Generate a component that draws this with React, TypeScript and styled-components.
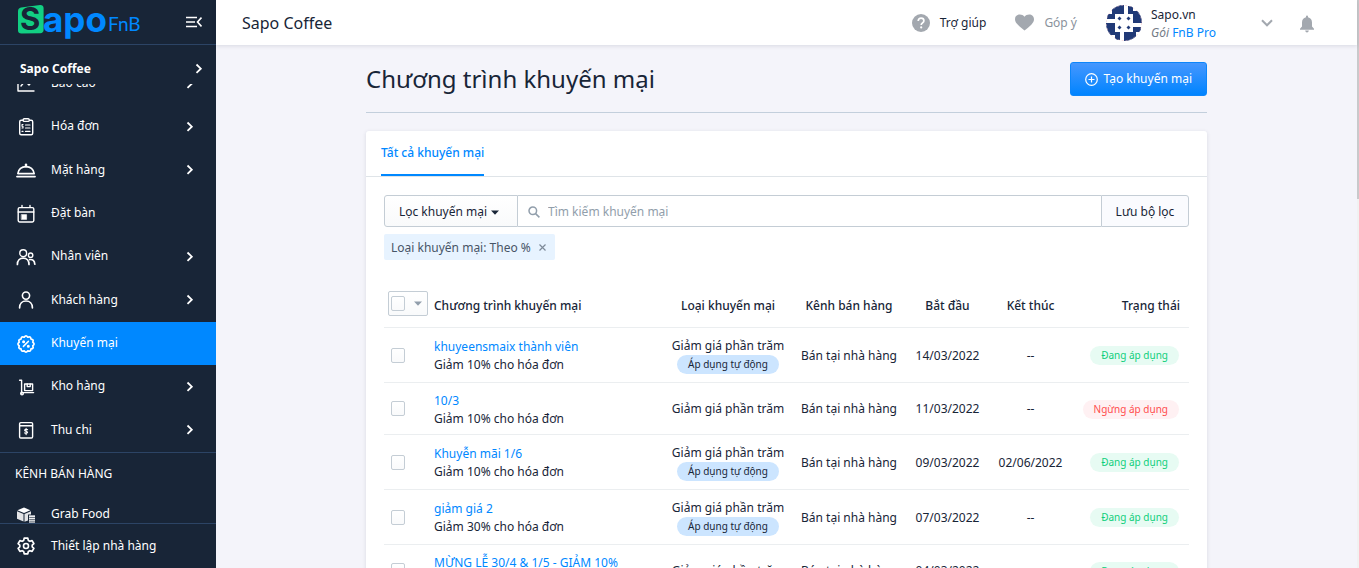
import React, { useLayoutEffect, useRef } from 'react';
import styled, { createGlobalStyle, css } from 'styled-components';

const GlobalStyle = createGlobalStyle`
  *, *::before, *::after { box-sizing: border-box; }
  body {
    margin: 0;
    background: #f4f4fa;
    color: #182537;
    font-family: "Noto Sans", "Open Sans", sans-serif;
    font-size: 12px;
    line-height: 18px;
  }
  button, input { font: inherit; color: inherit; }
  button { cursor: pointer; }
  a { text-decoration: none; color: inherit; }
`;

/* ---------- shell ---------- */

const Shell = styled.div`
  display: grid;
  grid-template-columns: 216px minmax(0, 1fr) 2px;
  height: 100vh;
  overflow: hidden;
`;

const ScrollRail = styled.div`
  background: #f1f1f1;
`;

const ScrollThumb = styled.div`
  height: 35%;
  background: #c9c9cb;
`;

/* ---------- sidebar ---------- */

const Sidebar = styled.aside`
  display: flex;
  flex-direction: column;
  min-height: 0;
  background: #182537;
  color: #fff;
`;

const LogoBar = styled.div`
  display: flex;
  flex: none;
  align-items: center;
  justify-content: space-between;
  height: 45px;
  padding: 0 14px 0 17px;
  border-bottom: 1px solid #2c4465;
`;

const IconButton = styled.button`
  display: flex;
  padding: 0;
  border: 0;
  background: none;
`;

const StoreLink = styled.a`
  display: flex;
  flex: none;
  align-items: center;
  justify-content: space-between;
  height: 39px;
  padding: 8px 13px 0 20px;
  font-weight: 700;
`;

const NavScroll = styled.nav`
  flex: 1;
  min-height: 0;
  overflow-y: auto;
  scrollbar-width: none;
`;

const NavList = styled.ul`
  display: grid;
  grid-auto-rows: 1fr;
  min-height: 390px;
  margin: 0;
  padding: 0;
  list-style: none;
`;

const ChannelSection = styled.section`
  border-top: 1px solid #2c4465;
`;

const ChannelHeading = styled.h2`
  margin: 0;
  padding: 12px 15px 10px;
  font-size: 12px;
  font-weight: 400;
  line-height: 18px;
`;

const NavLink = styled.a<{ $active?: boolean }>`
  display: grid;
  grid-template-columns: 20px 1fr auto;
  column-gap: 15px;
  align-items: center;
  height: 100%;
  min-height: 43px;
  padding: 0 22px 0 16px;
  background: ${(p) => (p.$active ? '#0088ff' : 'transparent')};
`;

const NavLabel = styled.span`
  padding-bottom: 1px;
`;

const SidebarFooter = styled.div`
  flex: none;
  height: 45px;
  border-top: 1px solid #2c4465;
`;

/* ---------- top bar ---------- */

const Main = styled.div`
  display: flex;
  flex-direction: column;
  min-width: 0;
  min-height: 0;
`;

const TopBar = styled.header`
  position: relative;
  display: flex;
  flex: none;
  align-items: center;
  justify-content: space-between;
  height: 45px;
  padding: 0 42px 0 26px;
  background: #fff;
  box-shadow: 0 1px 4px rgba(24, 37, 55, 0.12);
`;

const ShopName = styled.span`
  font-size: 16px;
  line-height: 20px;
`;

const TopActions = styled.div`
  display: flex;
  align-items: center;
`;

const TopLink = styled.a<{ $muted?: boolean }>`
  display: flex;
  align-items: center;
  gap: 10px;
  margin-right: 29px;
  color: ${(p) => (p.$muted ? '#8a929c' : '#182537')};
`;

const Account = styled.button`
  display: flex;
  align-items: center;
  width: 167px;
  margin-right: 26px;
  padding: 0;
  border: 0;
  background: none;
  text-align: left;
  svg:last-child { margin-left: auto; }
`;

const AccountText = styled.span`
  display: grid;
  margin-left: 9px;
  padding-top: 2px;
`;

const Plan = styled.span`
  color: #747c87;
  em { font-style: italic; }
  b { color: #0088ff; font-weight: 400; }
`;

/* ---------- page ---------- */

const Page = styled.main`
  flex: 1;
  min-height: 0;
  padding: 17px 20px 0;
  overflow: hidden;
`;

const Content = styled.div`
  max-width: 841px;
  margin: 0 auto;
`;

const TitleRow = styled.div`
  display: flex;
  align-items: center;
  justify-content: space-between;
  padding-bottom: 16px;
  border-bottom: 1px solid #c3cfdc;
`;

const Title = styled.h1`
  margin: 0;
  font-size: 24px;
  font-weight: 400;
  line-height: 34px;
`;

const PrimaryButton = styled.button`
  display: flex;
  align-items: center;
  gap: 5px;
  height: 34px;
  padding: 0 14px;
  border: 1px solid #0d86fa;
  border-radius: 3px;
  background: linear-gradient(#4697fe, #0084ff);
  color: #fff;
`;

const Card = styled.section`
  margin-top: 18px;
  border-radius: 3px;
  background: #fff;
  box-shadow: 0 1px 4px rgba(24, 37, 55, 0.12);
`;

const Tabs = styled.div`
  display: flex;
  padding: 0 15px;
  border-bottom: 1px solid #dfe4e8;
`;

const Tab = styled.button`
  height: 45px;
  padding: 0;
  border: 0;
  border-bottom: 2px solid #0088ff;
  background: none;
  color: #0088ff;
  font-weight: 500;
`;

const CardBody = styled.div`
  padding: 18px;
`;

const FilterBar = styled.form`
  display: flex;
  height: 32px;
`;

const filterButton = css`
  flex: none;
  border: 1px solid #c4cdd5;
  white-space: nowrap;
`;

const FilterButton = styled.button`
  ${filterButton}
  display: flex;
  align-items: center;
  justify-content: center;
  gap: 4px;
  width: 134px;
  padding: 2px 4px 0 0;
  border-radius: 3px 0 0 3px;
  background: linear-gradient(#fff, #f9fafb);
`;

const SaveButton = styled.button`
  ${filterButton}
  width: 88px;
  padding: 2px 0 0;
  border-radius: 0 3px 3px 0;
  background: #fafbfe;
`;

const SearchField = styled.label`
  display: flex;
  flex: 1;
  align-items: center;
  gap: 8px;
  min-width: 0;
  padding: 2px 0 0 10px;
  border: solid #c4cdd5;
  border-width: 1px 0;
`;

const SearchInput = styled.input`
  flex: 1;
  min-width: 0;
  padding: 0;
  border: 0;
  outline: 0;
  background: none;
  &::placeholder { color: #919eab; opacity: 1; }
`;

const Chip = styled.span`
  display: inline-flex;
  align-items: center;
  gap: 8px;
  height: 26px;
  margin-top: 7px;
  padding: 1px 9px 0 7px;
  border-radius: 2px;
  background: #e7f3ff;
  color: #475567;
`;

/* ---------- table ---------- */

const Table = styled.table`
  width: 100%;
  margin-top: 22px;
  border-collapse: collapse;
  table-layout: fixed;
`;

const HeadCell = styled.th<{ $align?: string }>`
  height: 45px;
  padding: 3px 0 0;
  border-bottom: 1px solid #ebeef0;
  font-weight: 500;
  text-align: ${(p) => p.$align ?? 'center'};
`;

const Cell = styled.td<{ $align?: string }>`
  padding: 2px 0 0;
  border-bottom: 1px solid #ebeef0;
  text-align: ${(p) => p.$align ?? 'center'};
`;

const NameHead = styled(HeadCell)`
  padding-left: 6px;
`;

const NameCell = styled(Cell)`
  padding: 9px 0 6px 6px;
`;

const TypeCell = styled(Cell)`
  padding: 9px 0 8px;
`;

const StatusHead = styled(HeadCell)`
  padding-right: 9px;
`;

const StatusCell = styled(Cell)`
  padding: 2px 10px 0 0;
`;

const CheckCell = styled(Cell)`
  padding: 1px 0 0 7px;
`;

const CheckHead = styled(HeadCell)`
  padding-left: 4px;
`;

const Checkbox = styled.input`
  appearance: none;
  display: block;
  width: 14px;
  height: 15px;
  margin: 0;
  border: 1px solid #c4cdd5;
  border-radius: 2px;
  background: linear-gradient(#fff, #f9fafb);
`;

const BulkBox = styled.span`
  display: flex;
  align-items: center;
  justify-content: space-between;
  width: 40px;
  height: 25px;
  margin-bottom: 4px;
  padding: 0 5px 0 2px;
  border: 1px solid #c4cdd5;
  border-radius: 2px;
  background: linear-gradient(#fff, #f9fafb);
`;

const PromoLink = styled.a`
  display: block;
  color: #0088ff;
  white-space: nowrap;
`;

const tones = {
  info: { bg: '#cce5ff', fg: '#182537' },
  success: { bg: '#e7fbf3', fg: '#0fcf7c' },
  danger: { bg: '#fff1f3', fg: '#ff4d4d' },
};

const Pill = styled.span<{ $tone: keyof typeof tones }>`
  display: inline-block;
  padding: 0 11px;
  border-radius: 10px;
  background: ${(p) => tones[p.$tone].bg};
  color: ${(p) => tones[p.$tone].fg};
  font-size: 10px;
  line-height: 19px;
  white-space: nowrap;
  vertical-align: top;
`;

/* ---------- icons ---------- */

const Chevron = () => (
  <svg width="8" height="12" viewBox="0 0 8 12" fill="none" stroke="#fff" strokeWidth="1.8">
    <path d="M1.5 1.5 5.8 5.7 1.5 9.9" />
  </svg>
);

const Caret = ({ color }: { color: string }) => (
  <svg width="8" height="5" viewBox="0 0 8 5" fill={color}>
    <path d="M0 0.5h8L4 4.8z" />
  </svg>
);

const NavIcon = ({ children }: { children: React.ReactNode }) => (
  <svg width="20" height="20" viewBox="0 0 20 20" fill="none" stroke="#fff" strokeWidth="1.4" strokeLinecap="round" strokeLinejoin="round">
    {children}
  </svg>
);

/* Scalloped badge outline: twelve bumps around the centre. */
const scallops = Array.from({ length: 12 }, (_, i) => {
  const at = (k: number, r: number) => {
    const a = (k * Math.PI) / 12;
    return `${(10 + r * Math.cos(a)).toFixed(2)} ${(10 + r * Math.sin(a)).toFixed(2)}`;
  };
  return `${i === 0 ? `M${at(-1, 7)}` : ''}Q${at(2 * i, 9.4)} ${at(2 * i + 1, 7)}`;
}).join('') + 'z';

const icons = {
  report: <path d="M2 3v14h16M5 12l4-5 4 4 5-6" />,
  invoice: (
    <>
      <rect x="3.7" y="3.2" width="13" height="14.6" rx="1.5" />
      <rect x="7.2" y="1.8" width="6" height="2.6" rx="1" fill="#182537" />
      <path d="M9.5 8h4.5M9.5 11h4.5M6 14.4h1M9.5 14.4h4.5M7 7.5H6v1.7h1v1.8H6" strokeWidth="1.1" />
    </>
  ),
  dish: (
    <>
      <path d="M1.8 13.6C2.6 9.4 5.8 6.6 10 6.6s7.4 2.8 8.2 7z" strokeWidth="1.6" />
      <path d="M10 4.6v1.6" strokeWidth="2.4" />
      <path d="M1 16.6h18" strokeWidth="1.8" />
    </>
  ),
  booking: (
    <>
      <rect x="2.2" y="3.6" width="15.6" height="14.4" rx="1.4" />
      <path d="M2.2 8h15.6M6 1.4v2M14 1.4v2" />
      <path d="M5.6 10.6h5v4.8h-5z" fill="#fff" strokeWidth="0.6" />
    </>
  ),
  staff: (
    <>
      <circle cx="7.2" cy="6.2" r="3.4" />
      <path d="M1.4 17.4c0-3.8 2.4-6.2 5.8-6.2s5.8 2.4 5.8 6.2" strokeWidth="1.7" />
      <circle cx="14.6" cy="8.2" r="2.2" />
      <path d="M13.6 12.6c3-.6 5 1.4 5.2 4.6" strokeWidth="1.7" />
    </>
  ),
  customer: (
    <>
      <circle cx="10" cy="5.6" r="3.6" strokeWidth="1.6" />
      <path d="M3.6 17.8c0-4.2 2.7-6.8 6.4-6.8s6.4 2.6 6.4 6.8" strokeWidth="1.7" />
    </>
  ),
  promo: (
    <>
      <path d={scallops} strokeWidth="1.7" />
      <path d="m7.4 12.4 5-5" strokeWidth="1.5" />
      <circle cx="7.6" cy="7.8" r="0.8" fill="#fff" />
      <circle cx="12.3" cy="12.2" r="0.8" fill="#fff" />
    </>
  ),
  stock: (
    <>
      <path d="M3.6 3.2h2v13M5.6 15.6h12" />
      <circle cx="6" cy="16.6" r="1.3" />
      <rect x="8.6" y="7" width="8" height="6.6" />
      <path d="M11.2 7v2.6h3V7" />
    </>
  ),
  cash: (
    <>
      <rect x="3.6" y="2.6" width="13" height="15.4" rx="1.2" />
      <path d="M3.8 5.8h12.6" />
      <path d="M11.6 9.6c-.6-.6-3-.6-3 .6s3 .8 3 2-2.4 1.2-3 .6M10.1 8.4v6.2" strokeWidth="1.1" />
    </>
  ),
  food: (
    <g stroke="none" fill="#fff">
      <path d="m8 2.6 6.4 2.6L8 8 1.4 5.2z" />
      <path d="M1 6.2 7.5 9v7.6L1 13.8zM8.5 9 15 6.2v3.2h-3v6l-3.5 1.4z" fillOpacity="0.88" />
      <path d="M13 10.4h6v7.2h-6z" />
      <path d="M13.6 12.4h5M13.6 14.4h5M13.6 16.2h5" stroke="#182537" strokeWidth="0.7" />
    </g>
  ),
  settings: (
    <>
      <circle cx="10" cy="10" r="2.5" strokeWidth="1.6" />
      <path
        strokeWidth="1.7"
        d="M8.2 2.2h3.6l.5 2.2 1.6.9 2.2-.7 1.8 3.1-1.7 1.5v1.6l1.7 1.5-1.8 3.1-2.2-.7-1.6.9-.5 2.2H8.2l-.5-2.2-1.6-.9-2.2.7-1.8-3.1 1.7-1.5V9.2L2.1 7.7l1.8-3.1 2.2.7 1.6-.9z"
      />
    </>
  ),
};

const Logo = () => (
  <svg width="126" height="36" viewBox="0 0 126 36" role="img" aria-label="Sapo FnB">
    <path d="M4 3.6 23 1c2-.2 3.600 1 3.600 3v22c0 2-1.400 3.200-3.200 3.200l-19 .3C2.200 29.500 1 28.200 1 26.400V7.200C1 5.200 2.200 3.900 4 3.600z" fill="#12cf83" />
    <text x="3" y="26" fontFamily="Inter" fontWeight="700" fontSize="31" fill="#182537">S</text>
    <text x="26" y="28" fontFamily="Inter" fontWeight="700" fontSize="35" fill="#0088ff">apo</text>
    <text x="91" y="27" fontFamily="Lato" fontWeight="400" fontSize="19" fill="#0088ff">FnB</text>
  </svg>
);

/* One arm of the identicon; the full pattern repeats it at each quarter turn. */
const avatarArm = 'M18 27h5v9h-5zM9 27h5v8H9zM0 23h9v5H4v4H0zM4 27h6v3H4z';

const Avatar = () => (
  <svg width="36" height="36" viewBox="0 0 36 36">
    <defs>
      <clipPath id="avatar-clip"><circle cx="18" cy="18" r="18" /></clipPath>
    </defs>
    <g clipPath="url(#avatar-clip)">
      <rect width="36" height="36" fill="#fff" />
      <g fill="#213a77">
        {[0, 90, 180, 270].map((turn) => (
          <path key={turn} d={avatarArm} transform={`rotate(${turn} 18 18)`} />
        ))}
        <path d="m13.5 11.5 2 2-2 2-2-2zM22.5 11.5l2 2-2 2-2-2zM13.5 20.5l2 2-2 2-2-2zM22.5 20.5l2 2-2 2-2-2z" />
      </g>
      <circle cx="18" cy="18" r="17.7" fill="none" stroke="#f0b8bd" strokeWidth="0.6" strokeDasharray="2 2" />
    </g>
  </svg>
);

/* ---------- data ---------- */

type NavEntry = { icon: keyof typeof icons; label: string; more?: boolean; active?: boolean };

const navEntries: NavEntry[] = [
  { icon: 'report', label: 'Báo cáo', more: true },
  { icon: 'invoice', label: 'Hóa đơn', more: true },
  { icon: 'dish', label: 'Mặt hàng', more: true },
  { icon: 'booking', label: 'Đặt bàn' },
  { icon: 'staff', label: 'Nhân viên', more: true },
  { icon: 'customer', label: 'Khách hàng', more: true },
  { icon: 'promo', label: 'Khuyến mại', active: true },
  { icon: 'stock', label: 'Kho hàng', more: true },
  { icon: 'cash', label: 'Thu chi', more: true },
];

const promotions = [
  { name: 'khuyeensmaix thành viên', detail: 'Giảm 10% cho hóa đơn', auto: true, start: '14/03/2022', end: '--', running: true },
  { name: '10/3', detail: 'Giảm 10% cho hóa đơn', auto: false, start: '11/03/2022', end: '--', running: false },
  { name: 'Khuyễn mãi 1/6', detail: 'Giảm 10% cho hóa đơn', auto: true, start: '09/03/2022', end: '02/06/2022', running: true },
  { name: 'giảm giá 2', detail: 'Giảm 30% cho hóa đơn', auto: true, start: '07/03/2022', end: '--', running: true },
  { name: 'MỪNG LỄ 30/4 & 1/5 - GIẢM 10%', detail: 'Giảm 10% cho hóa đơn', auto: false, start: '04/03/2022', end: '--', running: true },
];

const NavItem = ({ icon, label, more, active }: NavEntry) => (
  <NavLink href="#" $active={active} aria-current={active ? 'page' : undefined}>
    <NavIcon>{icons[icon]}</NavIcon>
    <NavLabel>{label}</NavLabel>
    {more && <Chevron />}
  </NavLink>
);

export default function App() {
  const navRef = useRef<HTMLElement>(null);

  // The menu opens with its first entry partly scrolled under the store name.
  useLayoutEffect(() => {
    if (navRef.current) navRef.current.scrollTop = 22;
  }, []);

  return (
    <>
      <GlobalStyle />
      <Shell>
        <Sidebar>
          <LogoBar>
            <Logo />
            <IconButton aria-label="Thu gọn menu">
              <svg width="16" height="12" viewBox="0 0 16 12" fill="none" stroke="#fff" strokeWidth="1.6">
                <path d="M0 1.5h11M0 6h9M0 10.5h11M15.5 1.5 11.5 6l4 4.5" />
              </svg>
            </IconButton>
          </LogoBar>
          <StoreLink href="#">
            Sapo Coffee
            <Chevron />
          </StoreLink>
          <NavScroll ref={navRef}>
            <NavList>
              {navEntries.map((entry) => (
                <li key={entry.label}><NavItem {...entry} /></li>
              ))}
            </NavList>
            <ChannelSection>
              <ChannelHeading>KÊNH BÁN HÀNG</ChannelHeading>
              <NavItem icon="food" label="Grab Food" />
            </ChannelSection>
          </NavScroll>
          <SidebarFooter>
            <NavItem icon="settings" label="Thiết lập nhà hàng" />
          </SidebarFooter>
        </Sidebar>

        <Main>
          <TopBar>
            <ShopName>Sapo Coffee</ShopName>
            <TopActions>
              <TopLink href="#">
                <svg width="18" height="18" viewBox="0 0 18 18">
                  <circle cx="9" cy="9" r="9" fill="#a3a8af" />
                  <path d="M6.2 7c0-1.700 1.200-2.800 2.900-2.800 1.600 0 2.800 1 2.800 2.500 0 2-2.700 2.200-2.700 4.200" fill="none" stroke="#fff" strokeWidth="1.7" />
                  <circle cx="9.2" cy="13.4" r="1.1" fill="#fff" />
                </svg>
                Trợ giúp
              </TopLink>
              <TopLink href="#" $muted>
                <svg width="19" height="17" viewBox="0 0 19 17" fill="#a3a8af">
                  <path d="M9.5 16.5C4 12 0 9 0 5.200 0 2.300 2.200.5 4.800.5c1.900 0 3.600.9 4.700 2.300C10.600 1.400 12.300.5 14.200.5 16.800.5 19 2.300 19 5.200c0 3.800-4 6.800-9.500 11.300z" />
                </svg>
                Góp ý
              </TopLink>
              <Account>
                <Avatar />
                <AccountText>
                  <span>Sapo.vn</span>
                  <Plan><em>Gói</em> <b>FnB Pro</b></Plan>
                </AccountText>
                <svg width="12" height="8" viewBox="0 0 12 8" fill="none" stroke="#a3a8af" strokeWidth="2">
                  <path d="M1 1.200 6 6.300l5-5.100" />
                </svg>
              </Account>
              <IconButton aria-label="Thông báo">
                <svg width="16" height="21" viewBox="0 -3 16 21" fill="#a3a8af">
                  <path d="M7 1.600a1 1 0 0 1 2 0v.6c2.500.5 4 2.500 4 5.200v4.100l2 2.300v.9H1v-.9l2-2.300V7.400c0-2.700 1.500-4.700 4-5.200zM6.200 15.600h3.600c0 1-.8 1.800-1.800 1.800s-1.800-.8-1.800-1.800z" />
                </svg>
              </IconButton>
            </TopActions>
          </TopBar>

          <Page>
            <Content>
              <TitleRow>
                <Title>Chương trình khuyến mại</Title>
                <PrimaryButton>
                  <svg width="13" height="13" viewBox="0 0 13 13" fill="none" stroke="#fff" strokeWidth="1.2">
                    <circle cx="6.5" cy="6.5" r="5.8" />
                    <path d="M6.5 3.5v6M3.5 6.5h6" />
                  </svg>
                  Tạo khuyến mại
                </PrimaryButton>
              </TitleRow>

              <Card>
                <Tabs role="tablist">
                  <Tab role="tab" aria-selected="true">Tất cả khuyến mại</Tab>
                </Tabs>
                <CardBody>
                  <FilterBar onSubmit={(e) => e.preventDefault()}>
                    <FilterButton type="button">
                      Lọc khuyến mại
                      <Caret color="#182537" />
                    </FilterButton>
                    <SearchField>
                      <svg width="12" height="12" viewBox="0 0 12 12" fill="none" stroke="#919eab" strokeWidth="1.5">
                        <circle cx="4.8" cy="4.8" r="3.8" />
                        <path d="m7.6 7.6 3.8 3.8" />
                      </svg>
                      <SearchInput type="search" aria-label="Tìm kiếm khuyến mại" placeholder="Tìm kiếm khuyến mại" />
                    </SearchField>
                    <SaveButton type="submit">Lưu bộ lọc</SaveButton>
                  </FilterBar>
                  <Chip>
                    Loại khuyến mại: Theo %
                    <IconButton aria-label="Xóa bộ lọc">
                      <svg width="7" height="7" viewBox="0 0 7 7" stroke="#7d8a99" strokeWidth="1.2">
                        <path d="m.5.5 6 6M6.5.5l-6 6" />
                      </svg>
                    </IconButton>
                  </Chip>

                  <Table>
                    <colgroup>
                      <col width="44" />
                      <col />
                      <col width="130" />
                      <col width="112" />
                      <col width="85" />
                      <col width="81" />
                      <col width="118" />
                    </colgroup>
                    <thead>
                      <tr>
                        <CheckHead>
                          <BulkBox>
                            <Checkbox type="checkbox" aria-label="Chọn tất cả" />
                            <Caret color="#919eab" />
                          </BulkBox>
                        </CheckHead>
                        <NameHead $align="left">Chương trình khuyến mại</NameHead>
                        <HeadCell>Loại khuyến mại</HeadCell>
                        <HeadCell>Kênh bán hàng</HeadCell>
                        <HeadCell>Bắt đầu</HeadCell>
                        <HeadCell>Kết thúc</HeadCell>
                        <StatusHead $align="right">Trạng thái</StatusHead>
                      </tr>
                    </thead>
                    <tbody>
                      {promotions.map((promo) => (
                        <tr key={promo.name}>
                          <CheckCell>
                            <Checkbox type="checkbox" aria-label={promo.name} />
                          </CheckCell>
                          <NameCell $align="left">
                            <PromoLink href="#">{promo.name}</PromoLink>
                            {promo.detail}
                          </NameCell>
                          <TypeCell>
                            <div>Giảm giá phần trăm</div>
                            {promo.auto && <Pill $tone="info">Áp dụng tự động</Pill>}
                          </TypeCell>
                          <Cell>Bán tại nhà hàng</Cell>
                          <Cell>{promo.start}</Cell>
                          <Cell>{promo.end}</Cell>
                          <StatusCell $align="right">
                            <Pill $tone={promo.running ? 'success' : 'danger'}>
                              {promo.running ? 'Đang áp dụng' : 'Ngừng áp dụng'}
                            </Pill>
                          </StatusCell>
                        </tr>
                      ))}
                    </tbody>
                  </Table>
                </CardBody>
              </Card>
            </Content>
          </Page>
        </Main>

        <ScrollRail aria-hidden="true"><ScrollThumb /></ScrollRail>
      </Shell>
    </>
  );
}
